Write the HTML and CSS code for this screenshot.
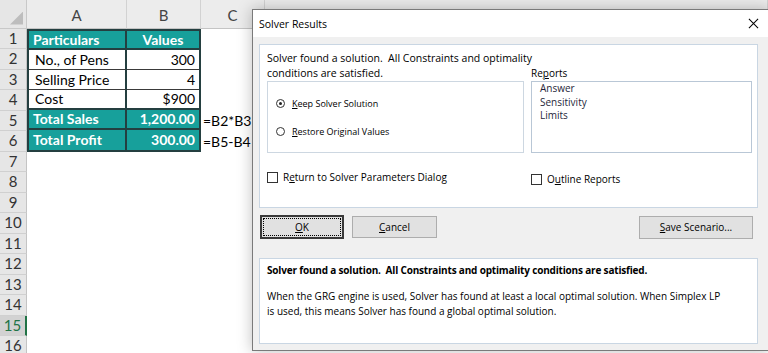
FILE: index.html
```html
<!DOCTYPE html>
<html lang="en">
<head>
  <meta charset="UTF-8" />
  <meta name="viewport" content="width=device-width, initial-scale=1.0" />
  <title>Solver Results</title>
  <link rel="stylesheet" href="styles.css">
</head>

<body>
  <div class="sheet">
    <div class="corner"><span class="tri"></span></div>
    <div class="col-head">A</div>
    <div class="col-head">B</div>
    <div class="col-head">C</div>
    <div class="col-head"></div>

    <div class="row-head">1</div>
    <div class="row-head">2</div>
    <div class="row-head">3</div>
    <div class="row-head">4</div>
    <div class="row-head">5</div>
    <div class="row-head">6</div>
    <div class="row-head">7</div>
    <div class="row-head">8</div>
    <div class="row-head">9</div>
    <div class="row-head">10</div>
    <div class="row-head">11</div>
    <div class="row-head">12</div>
    <div class="row-head">13</div>
    <div class="row-head">14</div>
    <div class="row-head active">15</div>
    <div class="row-head">16</div>

    <div class="data">
      <div class="cell head left-col thick">Particulars</div>
      <div class="cell head center thick">Values</div>
      <div class="cell left-col thin indent">No., of Pens</div>
      <div class="cell num thin">300</div>
      <div class="cell left-col thin indent">Selling Price</div>
      <div class="cell num thin">4</div>
      <div class="cell left-col thick indent">Cost</div>
      <div class="cell num thick">$900</div>
      <div class="cell head left-col thick">Total Sales</div>
      <div class="cell head num thick">1,200.00</div>
      <div class="cell head left-col">Total Profit</div>
      <div class="cell head num">300.00</div>
    </div>

    <div class="formula f1">=B2*B3</div>
    <div class="formula f2">=B5-B4</div>
  </div>

  <div class="dialog">
    <div class="titlebar">
      <span>Solver Results</span>
      <svg class="close" viewBox="0 0 12 12" width="12" height="12">
        <path d="M1 1 L11 11 M11 1 L1 11" stroke="#000" stroke-width="1.1" fill="none"></path>
      </svg>
    </div>

    <div class="panel top">
      <div class="msg">Solver found a solution.&nbsp; All Constraints and optimality<br>conditions are satisfied.</div>
      <div class="reports-label">Re<u>p</u>orts</div>

      <div class="radio-box">
        <label class="radio"><span class="dot on"></span><span><u>K</u>eep Solver Solution</span></label>
        <label class="radio"><span class="dot"></span><span><u>R</u>estore Original Values</span></label>
      </div>
      <div class="listbox">
        <div>Answer</div>
        <div>Sensitivity</div>
        <div>Limits</div>
      </div>

      <label class="check"><span class="box"></span><span>R<u>e</u>turn to Solver Parameters Dialog</span></label>
      <label class="check low"><span class="box"></span><span>O<u>u</u>tline Reports</span></label>
    </div>

    <div class="buttons">
      <button class="btn ok" type="button"><u>O</u>K</button>
      <button class="btn cancel" type="button"><u>C</u>ancel</button>
      <button class="btn save" type="button"><u>S</u>ave Scenario...</button>
    </div>

    <div class="panel bottom">
      <p class="strong">Solver found a solution.&nbsp; All Constraints and optimality conditions are satisfied.</p>
      <p>When the GRG engine is used, Solver has found at least a local optimal solution. When Simplex LP<br>is used, this means Solver has found a global optimal solution.</p>
    </div>
  </div>
</body>
</html>
```

FILE: styles.css
```css
* {
  margin: 0;
  padding: 0;
  box-sizing: border-box;
}

body {
  width: 768px;
  height: 353px;
  overflow: hidden;
  background: #fff;
  font-family: 'Lato', sans-serif;
  color: #000;
  position: relative;
}

/* spreadsheet */

.sheet {
  display: grid;
  grid-template-columns: 27px 100px 74px 64px 1fr;
  grid-template-rows: 28.5px repeat(16, 20.5px);
  font-size: 14px;
}

.corner {
  background: #e6e6e6;
  border-right: 1px solid #c8c8c8;
  border-bottom: 1px solid #c8c8c8;
  position: relative;
}

.tri {
  position: absolute;
  right: 3px;
  bottom: 3px;
  width: 13px;
  height: 13px;
  background: #bdbdbd;
  clip-path: polygon(100% 0, 100% 100%, 0 100%);
}

.col-head {
  background: #ececec;
  border-right: 1px solid #d2d2d2;
  border-bottom: 1px solid #c4c4c4;
  color: #444;
  font-size: 15px;
  display: flex;
  align-items: center;
  justify-content: center;
  padding-top: 2px;
}

.row-head {
  grid-column: 1;
  background: #e6e6e6;
  border-right: 1px solid #c4c4c4;
  border-bottom: 1px solid #d0d0d0;
  color: #333;
  font-size: 15px;
  display: flex;
  align-items: center;
  justify-content: center;
  padding-bottom: 1px;
}

.row-head.active {
  background: #d2d2d2;
  color: #217346;
  border-right: 2px solid #217346;
}

.data {
  grid-column: 2 / 4;
  grid-row: 2 / 8;
  display: grid;
  grid-template-columns: 1fr 72px;
  grid-template-rows: repeat(6, 1fr);
  border: 2px solid #243f40;
}

.cell {
  display: flex;
  align-items: center;
  padding: 0 4px;
  white-space: nowrap;
  background: #fff;
}

.cell.head {
  background: #17a09b;
  color: #fff;
  font-weight: 700;
}

.left-col {
  border-right: 2px solid #243f40;
}

.thick {
  border-bottom: 2px solid #243f40;
}

.thin {
  border-bottom: 1px solid #3a3a3a;
}

.indent {
  padding-left: 6px;
}

.center {
  justify-content: center;
}

.num {
  justify-content: flex-end;
}

.formula {
  grid-column: 4;
  padding-left: 2px;
  display: flex;
  align-items: center;
  white-space: nowrap;
}

.f1 {
  grid-row: 6;
}

.f2 {
  grid-row: 7;
}

/* solver dialog */

.dialog {
  position: absolute;
  left: 252px;
  top: 9px;
  width: 518px;
  height: 342px;
  background: #f0f0f0;
  border: 1px solid #7a7a7a;
  box-shadow: 0 0 14px rgba(0, 0, 0, 0.25);
  font-family: 'Open Sans', sans-serif;
  font-size: 10px;
  display: flex;
  flex-direction: column;
}

.titlebar {
  height: 27px;
  background: #fff;
  display: flex;
  align-items: center;
  justify-content: space-between;
  padding: 0 10px 0 6px;
  font-size: 10.5px;
}

.close {
  width: 11px;
  height: 11px;
}

.panel {
  background: #fff;
  border: 1px solid #c9d6e3;
  margin: 0 11px 0 6px;
}

.panel.top {
  margin-top: 7px;
  height: 164px;
  display: grid;
  grid-template-columns: 257px 221px;
  grid-template-rows: 30px 72px auto;
  column-gap: 7px;
  padding: 6px 0 0 7px;
}

.msg {
  line-height: 15px;
  white-space: nowrap;
  font-size: 10.5px;
}

.reports-label {
  align-self: end;
  line-height: 15px;
}

.radio-box {
  border: 1px solid #cdd7e1;
  display: flex;
  flex-direction: column;
  gap: 10px;
  padding: 12px 0 0 8px;
  font-size: 9px;
}

.radio {
  display: flex;
  align-items: center;
  gap: 7px;
  height: 18px;
}

.dot {
  width: 9px;
  height: 9px;
  border: 1px solid #333;
  border-radius: 50%;
  display: flex;
  align-items: center;
  justify-content: center;
}

.dot.on::after {
  content: '';
  width: 3px;
  height: 3px;
  border-radius: 50%;
  background: #222;
}

.listbox {
  border: 1px solid #b9c7d6;
  padding: 0 0 0 8px;
  line-height: 13.5px;
  color: #1f1f3a;
}

.check {
  display: flex;
  align-items: center;
  gap: 5px;
  margin-top: 18px;
  height: 12px;
}

.check.low {
  margin-top: 20px;
}

.box {
  width: 11px;
  height: 11px;
  border: 1px solid #333;
  background: #fff;
}

.buttons {
  display: flex;
  align-items: center;
  padding: 0 0 0 7px;
  margin-top: 6px;
  height: 26px;
}

.btn {
  font-family: 'Open Sans', sans-serif;
  font-size: 10px;
  background: #e1e1e1;
  border: 1px solid #adadad;
  color: #000;
  height: 23px;
}

.btn.ok {
  width: 84px;
  height: 24px;
  border: 2px solid #3a3a3a;
  outline: 1px dotted #000;
  outline-offset: -4px;
}

.btn.cancel {
  width: 85px;
  margin-left: 8px;
  height: 22px;
}

.btn.save {
  width: 114px;
  margin-left: auto;
  margin-right: 16px;
}

.panel.bottom {
  margin-top: 18px;
  height: 86px;
  padding: 4px 7px;
  line-height: 15px;
}

.strong {
  font-weight: 700;
  letter-spacing: -0.18px;
  margin-bottom: 11px;
}
```
